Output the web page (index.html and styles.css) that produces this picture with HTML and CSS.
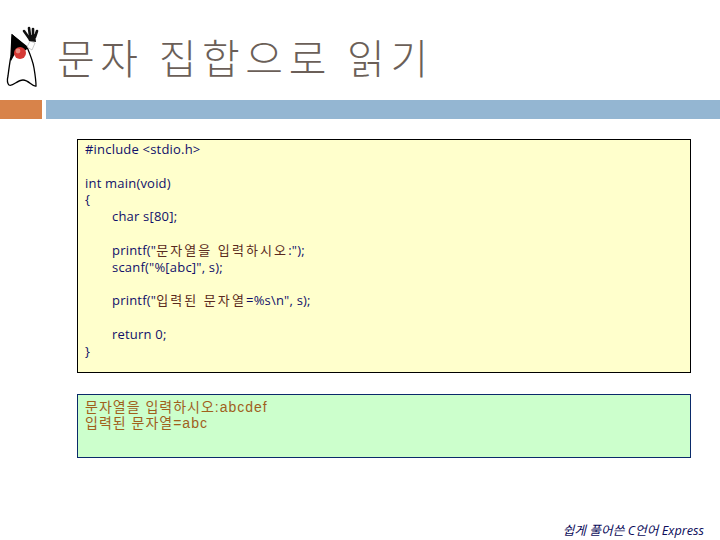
FILE: index.html
```html
<!DOCTYPE html>
<html lang="ko">
<head>
<meta charset="utf-8">
<title>문자 집합으로 읽기</title>
<link rel="stylesheet" href="styles.css">
</head>
<body>
<header class="header">
  <svg class="duke" width="34" height="62" viewBox="0 0 34 62" aria-hidden="true">
    <path d="M7 9 L22 21 C25 28 28 36 29 42 C30 48 31 54 31 60 C27 61 24 54 18 54 C12 54 8 61 4 59 C2 57 2 54 3 50 C4 42 5 35 6 30 Z" fill="#fff" stroke="#000" stroke-width="1.3"/>
    <path d="M7 8 L23 22 C20 26 14 27 12 26 C9 28 8 32 6 35 C6 26 6 16 7 8 Z" fill="#000"/>
    <circle cx="15" cy="27" r="6" fill="#d63a35"/>
    <circle cx="13" cy="25" r="2.4" fill="#ea8a80"/>
    <path d="M22 21 L25 15 L30 17 L27 24 Z" fill="#fff" stroke="#aaa" stroke-width=".6"/>
    <path d="M24 15 L22 10 L30 8 L31 16 Z" fill="#111"/>
    <g class="fingers">
      <path d="M24 12 L19 5"/>
      <path d="M25 10 L24 2"/>
      <path d="M28 10 L28 3"/>
      <path d="M30 11 L32 5"/>
    </g>
  </svg>
  <h1 class="title">문자 집합으로 읽기</h1>
</header>
<div class="bars">
  <div class="bar-orange"></div>
  <div class="bar-blue"></div>
</div>
<main class="content">
  <div class="box code">
    <div class="line">#include &lt;stdio.h&gt;</div>
    <div class="line"></div>
    <div class="line">int main(void)</div>
    <div class="line">{</div>
    <div class="line indent">char s[80];</div>
    <div class="line"></div>
    <div class="line indent">printf("<span class="ko">문자열을 입력하시오</span>:");</div>
    <div class="line indent">scanf("%[abc]", s);</div>
    <div class="line"></div>
    <div class="line indent">printf("<span class="ko">입력된 문자열</span>=%s\n", s);</div>
    <div class="line"></div>
    <div class="line indent">return 0;</div>
    <div class="line">}</div>
  </div>
  <div class="box output">
    <div class="line">문자열을 입력하시오:abcdef</div>
    <div class="line">입력된 문자열=abc</div>
  </div>
</main>
<footer class="footer">쉽게 풀어쓴 C언어 Express</footer>
</body>
</html>
```
FILE: styles.css
```css
* { box-sizing: border-box; }
html, body { margin: 0; padding: 0; }
body {
  width: 720px;
  height: 540px;
  background: #fff;
  overflow: hidden;
  font-family: "Open Sans", "Noto Sans CJK KR", sans-serif;
  position: relative;
}
.header {
  height: 100px;
  display: flex;
  align-items: flex-start;
  padding: 26px 0 0 5px;
}
.duke { flex: none; }
.fingers path {
  fill: none;
  stroke: #111;
  stroke-width: 2.6;
  stroke-linecap: round;
}
.title {
  margin: 0 0 0 18px;
  font-family: "Noto Sans CJK KR", sans-serif;
  font-weight: 300;
  font-size: 41px;
  line-height: 60px;
  letter-spacing: 5.6px;
  word-spacing: -2px;
  color: #6b5f58;
  white-space: nowrap;
}
.bars {
  display: flex;
  gap: 4px;
  height: 19px;
}
.bar-orange { width: 42px; background: #d8834a; }
.bar-blue { flex: 1; background: #94b6d2; }
.content {
  display: flex;
  flex-direction: column;
  gap: 21px;
  margin: 20px 29px 0 77px;
}
.box {
  border: 1px solid #000;
  padding: 1px 0 0 7px;
  font-size: 13px;
  letter-spacing: .2px;
  color: #10106a;
}
.line {
  min-height: 16.8px;
  line-height: 16.8px;
  white-space: pre;
}
.indent { padding-left: 27px; }
.ko { letter-spacing: 2.1px; color: #5a2a20; }
.code { height: 234px; background: #ffffcc; }
.output {
  height: 64px;
  padding-top: 4px;
  background: #ccffcc;
  border-color: #0a2a6a;
  color: #a0601c;
  font-family: "Liberation Sans", "Noto Sans CJK KR", sans-serif;
  font-size: 14px;
  letter-spacing: 1px;
}
.output .line { min-height: 16px; line-height: 16px; }
.footer {
  position: absolute;
  right: 16px;
  bottom: 2px;
  font-size: 12.7px;
  line-height: 16px;
  font-style: italic;
  color: #0c0c5a;
}
```
